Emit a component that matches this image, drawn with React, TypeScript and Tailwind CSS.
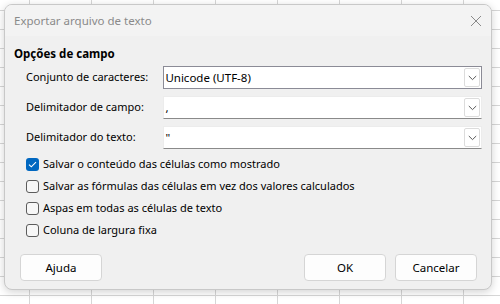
import { useState } from 'react'

const font = { fontFamily: '"Noto Sans", "Open Sans", sans-serif' }

function Chevron() {
  return (
    <svg width="9" height="6" viewBox="0 0 9 6" fill="none">
      <path d="M0.8 1 L4.5 4.6 L8.2 1" stroke="#5a5a5a" strokeWidth="1" />
    </svg>
  )
}

function Combo({ value, focused }: { value: string; focused?: boolean }) {
  return (
    <div
      className={`flex h-[23px] w-[320px] items-stretch bg-white ${
        focused
          ? 'border border-[#8b8b96]'
          : 'border border-[#ececec] border-b-[#8a8a8a]'
      }`}
    >
      <span className="flex flex-1 items-center pl-[1px] text-[11.5px] text-black">{value}</span>
      <span className="my-[1px] mr-[1px] flex w-[16px] items-center justify-center rounded-[2px] border border-[#dcdcdc] bg-white">
        <Chevron />
      </span>
    </div>
  )
}

function Check({ label, checked }: { label: string; checked?: boolean }) {
  return (
    <div className="flex h-[22px] items-center gap-[4px]">
      {checked ? (
        <span className="flex h-[13px] w-[13px] items-center justify-center rounded-[3px] bg-[#0067c0]">
          <svg width="9" height="7" viewBox="0 0 9 7" fill="none">
            <path d="M1 3.6 L3.3 5.8 L8 1.2" stroke="white" strokeWidth="1.1" />
          </svg>
        </span>
      ) : (
        <span className="h-[13px] w-[13px] rounded-[3px] border border-[#5c5c5c] bg-[#f7f7f7]" />
      )}
      <span className="text-[11px] text-black">{label}</span>
    </div>
  )
}

function Btn({ children }: { children: string }) {
  return (
    <button className="flex h-[27px] w-[82px] items-center justify-center rounded-[4px] border border-[#d5d5d5] bg-[#fdfdfd] text-[11.5px] text-black">
      {children}
    </button>
  )
}

export default function App() {
  const [sep] = useState(',')
  return (
    <div
      style={font}
      className="h-[304px] w-[500px] overflow-hidden bg-white bg-[linear-gradient(to_right,#d6d6d6_1px,transparent_1px),linear-gradient(to_bottom,#d6d6d6_1px,transparent_1px)] bg-[size:62px_19px] bg-[position:29px_10px] pl-[4px] pt-[4px]"
    >
      <div className="flex h-[286px] w-[488px] flex-col overflow-hidden rounded-[8px] border border-[#c8c8c8] bg-[#f0f0f0] shadow-[0_2px_8px_rgba(0,0,0,0.18)]">
        <div className="flex h-[31px] items-center justify-between bg-[#f3f3f3] pl-[9px] pr-[9px]">
          <span className="text-[11.5px] text-[#8a8a8a]">Exportar arquivo de texto</span>
          <svg width="12" height="12" viewBox="0 0 12 12" fill="none">
            <path d="M1 1 L11 11 M11 1 L1 11" stroke="#8a8a8a" strokeWidth="1" />
          </svg>
        </div>
        <div className="flex flex-1 flex-col px-[9px] pt-[10px]">
          <div className="text-[11.5px] font-bold leading-[16px] text-black">Opções de campo</div>
          <div className="mt-[4px] flex flex-col gap-[7px] pl-[12px]">
            <div className="flex items-center">
              <span className="w-[138px] text-[11px] text-black">Conjunto de caracteres:</span>
              <Combo value="Unicode (UTF-8)" focused />
            </div>
            <div className="flex items-center">
              <span className="w-[138px] text-[11px] text-black">Delimitador de campo:</span>
              <Combo value={sep} />
            </div>
            <div className="flex items-center">
              <span className="w-[138px] text-[11px] text-black">Delimitador do texto:</span>
              <Combo value={'"'} />
            </div>
          </div>
          <div className="mt-[4px] flex flex-col pl-[12px]">
            <Check label="Salvar o conteúdo das células como mostrado" checked />
            <Check label="Salvar as fórmulas das células em vez dos valores calculados" />
            <Check label="Aspas em todas as células de texto" />
            <Check label="Coluna de largura fixa" />
          </div>
          <div className="mt-auto mb-[8px] flex items-center pl-[6px] pr-[5px]">
            <Btn>Ajuda</Btn>
            <div className="flex-1" />
            <div className="flex gap-[9px]">
              <Btn>OK</Btn>
              <Btn>Cancelar</Btn>
            </div>
          </div>
        </div>
      </div>
    </div>
  )
}
